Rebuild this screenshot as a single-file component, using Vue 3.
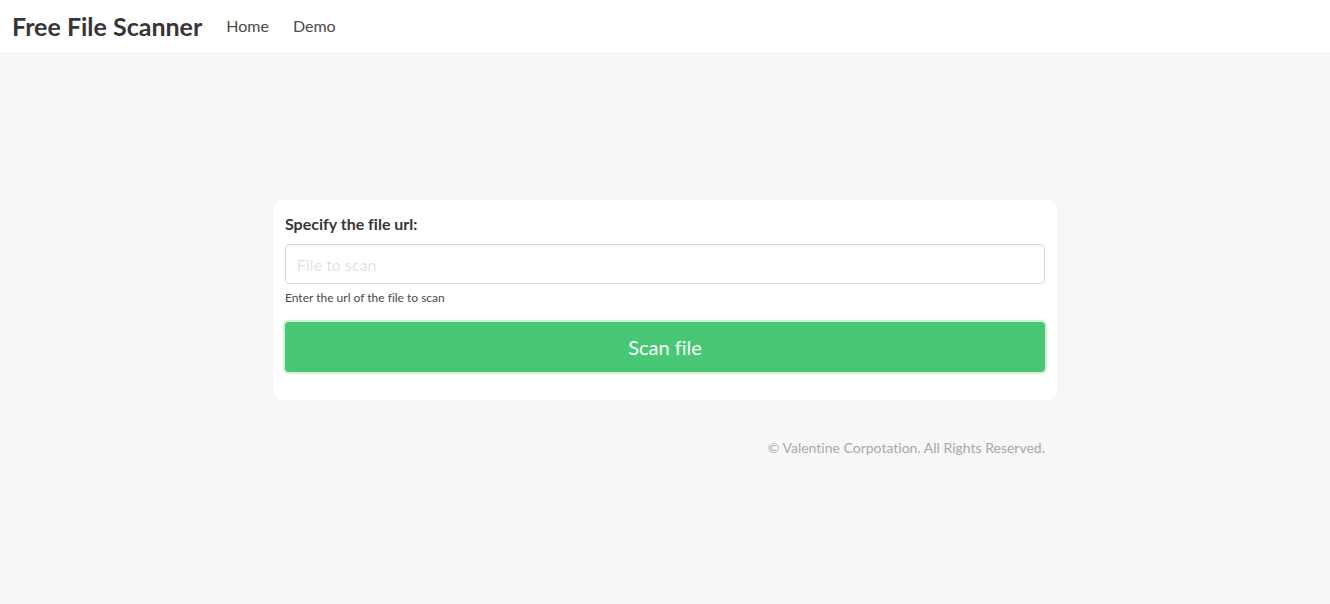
<script setup>
import { ref } from 'vue'

const fileUrl = ref('')
</script>

<template>
  <div class="page">
    <nav class="navbar">
      <a class="brand" href="#">Free File Scanner</a>
      <a class="nav-item" href="#">Home</a>
      <a class="nav-item" href="#">Demo</a>
    </nav>
    <main class="hero">
      <div class="column">
        <form class="box" @submit.prevent>
          <label class="label" for="file-url">Specify the file url:</label>
          <input id="file-url" v-model="fileUrl" class="input" type="text" placeholder="File to scan" />
          <p class="help">Enter the url of the file to scan</p>
          <button class="button" type="submit">Scan file</button>
        </form>
        <p class="copyright">© Valentine Corpotation. All Rights Reserved.</p>
      </div>
    </main>
  </div>
</template>

<style>
body {
  margin: 0;
  background: #f7f7f7;
}
</style>

<style scoped>
.page {
  display: flex;
  flex-direction: column;
  min-height: 100vh;
  font-family: Lato, "Noto Sans", sans-serif;
  font-size: 16px;
  font-variant-ligatures: none;
  line-height: 24px;
  color: #4a4a4a;
}

.page * {
  box-sizing: border-box;
}

.navbar {
  display: flex;
  align-items: stretch;
  min-height: 52px;
  background: #fff;
}

.brand,
.nav-item {
  display: flex;
  align-items: center;
  padding: 8px 12px;
  color: #4a4a4a;
  text-decoration: none;
}

.brand {
  color: #363636;
  font-size: 25px;
  font-weight: 700;
}

.hero {
  display: flex;
  flex: 1;
  align-items: center;
  justify-content: center;
  padding: 52px 24px 48px;
}

.column {
  width: 100%;
  max-width: 784px;
}

.box {
  padding: 12px 12px 28px;
  border-radius: 10px;
  background: #fff;
}

.label {
  display: block;
  margin-bottom: 8px;
  color: #363636;
  font-weight: 700;
}

.input {
  display: block;
  width: 100%;
  height: 40px;
  padding: 0 11px;
  border: 1px solid #dbdbdb;
  border-radius: 4px;
  background: #fff;
  box-shadow: inset 0 1px 2px rgba(10, 10, 10, 0.05);
  color: #363636;
  font: inherit;
  font-variant-ligatures: none;
}

.input::placeholder {
  color: rgba(54, 54, 54, 0.16);
  opacity: 1;
}

.help {
  margin: 5px 0 15px;
  font-size: 12px;
  line-height: 18px;
}

.button {
  display: block;
  width: 100%;
  height: 50px;
  padding: 0;
  border: 0;
  border-radius: 4px;
  background: #48c774;
  box-shadow: 0 0 0 2px rgba(72, 199, 116, 0.25);
  color: #fff;
  font: inherit;
  font-size: 20px;
  font-variant-ligatures: none;
}

.copyright {
  margin: 36px 12px 0;
  color: #a8a8a8;
  font-size: 14px;
  text-align: right;
}
</style>
